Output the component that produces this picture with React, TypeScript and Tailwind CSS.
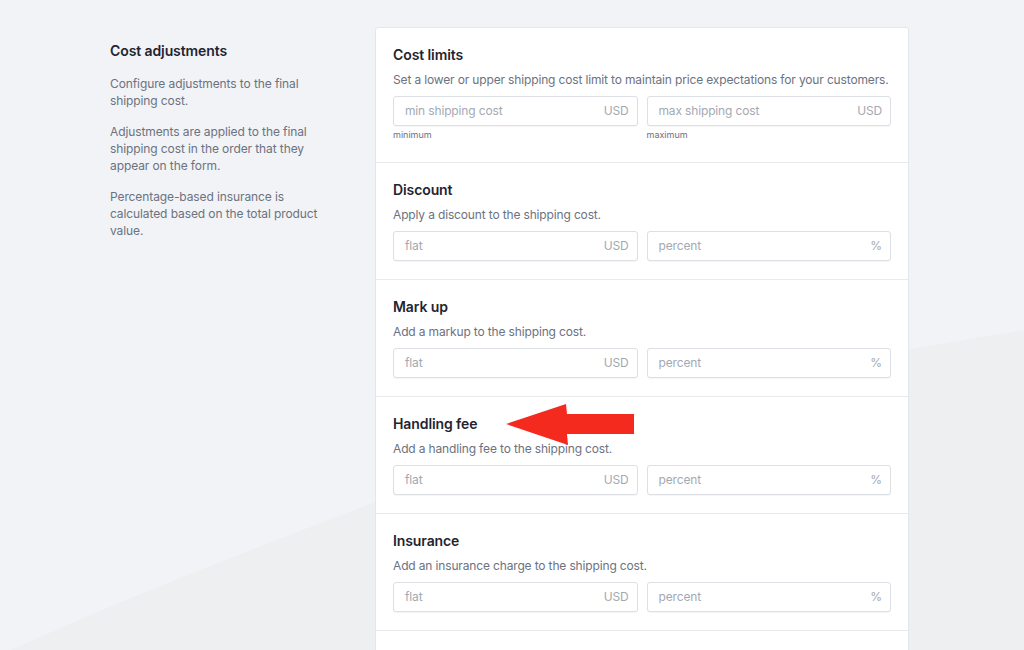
import React from "react";

type Field = { ph: string; suffix: string; helper?: string };
type Section = { title: string; desc: string; fields: Field[] };

const sections: Section[] = [
  {
    title: "Cost limits",
    desc: "Set a lower or upper shipping cost limit to maintain price expectations for your customers.",
    fields: [
      { ph: "min shipping cost", suffix: "USD", helper: "minimum" },
      { ph: "max shipping cost", suffix: "USD", helper: "maximum" },
    ],
  },
  {
    title: "Discount",
    desc: "Apply a discount to the shipping cost.",
    fields: [
      { ph: "flat", suffix: "USD" },
      { ph: "percent", suffix: "%" },
    ],
  },
  {
    title: "Mark up",
    desc: "Add a markup to the shipping cost.",
    fields: [
      { ph: "flat", suffix: "USD" },
      { ph: "percent", suffix: "%" },
    ],
  },
  {
    title: "Handling fee",
    desc: "Add a handling fee to the shipping cost.",
    fields: [
      { ph: "flat", suffix: "USD" },
      { ph: "percent", suffix: "%" },
    ],
  },
  {
    title: "Insurance",
    desc: "Add an insurance charge to the shipping cost.",
    fields: [
      { ph: "flat", suffix: "USD" },
      { ph: "percent", suffix: "%" },
    ],
  },
];

function Input({ f }: { f: Field }) {
  return (
    <div className="flex flex-col">
      <div className="flex h-[30px] items-center rounded-[3px] border border-[#dcdfe3] bg-white pl-[11px] pr-[8px] shadow-[0_1px_1px_rgba(0,0,0,0.04)]">
        <span className="flex-1 text-[12px] tracking-[-0.15px] text-[#a3a9b2]">{f.ph}</span>
        <span className="text-[12px] tracking-[-0.15px] text-[#a3a9b2]">{f.suffix}</span>
      </div>
      {f.helper && (
        <div className="mt-[3px] text-[9px] leading-[12px] text-[#6b7280]">{f.helper}</div>
      )}
    </div>
  );
}

export default function App() {
  return (
    <div
      className="relative h-[650px] w-[1024px] overflow-hidden bg-[#f2f3f6]"
      style={{ fontFamily: "Inter, 'Noto Sans', sans-serif" }}
    >
      <svg className="absolute inset-0" width="1024" height="650" viewBox="0 0 1024 650">
        <path
          d="M0 655 C 120 600, 250 550, 375 502 C 560 430, 760 370, 1024 330 L 1024 650 L 0 650 Z"
          fill="#eeeff1"
        />
      </svg>

      <div className="relative flex pl-[110px] pt-[27px]">
        <div className="w-[265px] pt-[15px]">
          <h2 className="text-[14px] font-semibold leading-[18px] tracking-[-0.1px] text-[#1f2430]">Cost adjustments</h2>
          <div className="mt-[15px] w-[212px] space-y-[14px] text-[12px] leading-[17px] tracking-[-0.1px] text-[#6b7280]">
            <p>Configure adjustments to the final shipping cost.</p>
            <p>Adjustments are applied to the final shipping cost in the order that they appear on the form.</p>
            <p>Percentage-based insurance is calculated based on the total product value.</p>
          </div>
        </div>

        <div className="w-[534px] rounded-t-[3px] border border-[#e3e6ea] bg-white">
          {sections.map((s, i) => (
            <div
              key={s.title}
              className={`px-[17px] pt-[17px] ${i === 0 ? "pb-[21px]" : "pb-[18px]"} border-b border-[#e8eaed]`}
            >
              <h3 className="text-[14px] font-semibold leading-[20px] tracking-[-0.1px] text-[#1f2430]">{s.title}</h3>
              <p className="mt-[6px] whitespace-nowrap text-[12px] leading-[18px] tracking-[-0.15px] text-[#6b7280]">{s.desc}</p>
              <div className="mt-[7px] grid grid-cols-2 gap-[9px]">
                {s.fields.map((f) => (
                  <Input key={f.ph + f.suffix} f={f} />
                ))}
              </div>
            </div>
          ))}
          <div className="h-[40px]" />
        </div>
      </div>

      <svg
        className="absolute left-[504px] top-[403px]"
        width="132"
        height="44"
        viewBox="0 0 132 44"
      >
        <path d="M2 21 L62 1 L63 11 L130 11 L130 31 L63 31 L64 42 Z" fill="#f42a1e" />
      </svg>
    </div>
  );
}
